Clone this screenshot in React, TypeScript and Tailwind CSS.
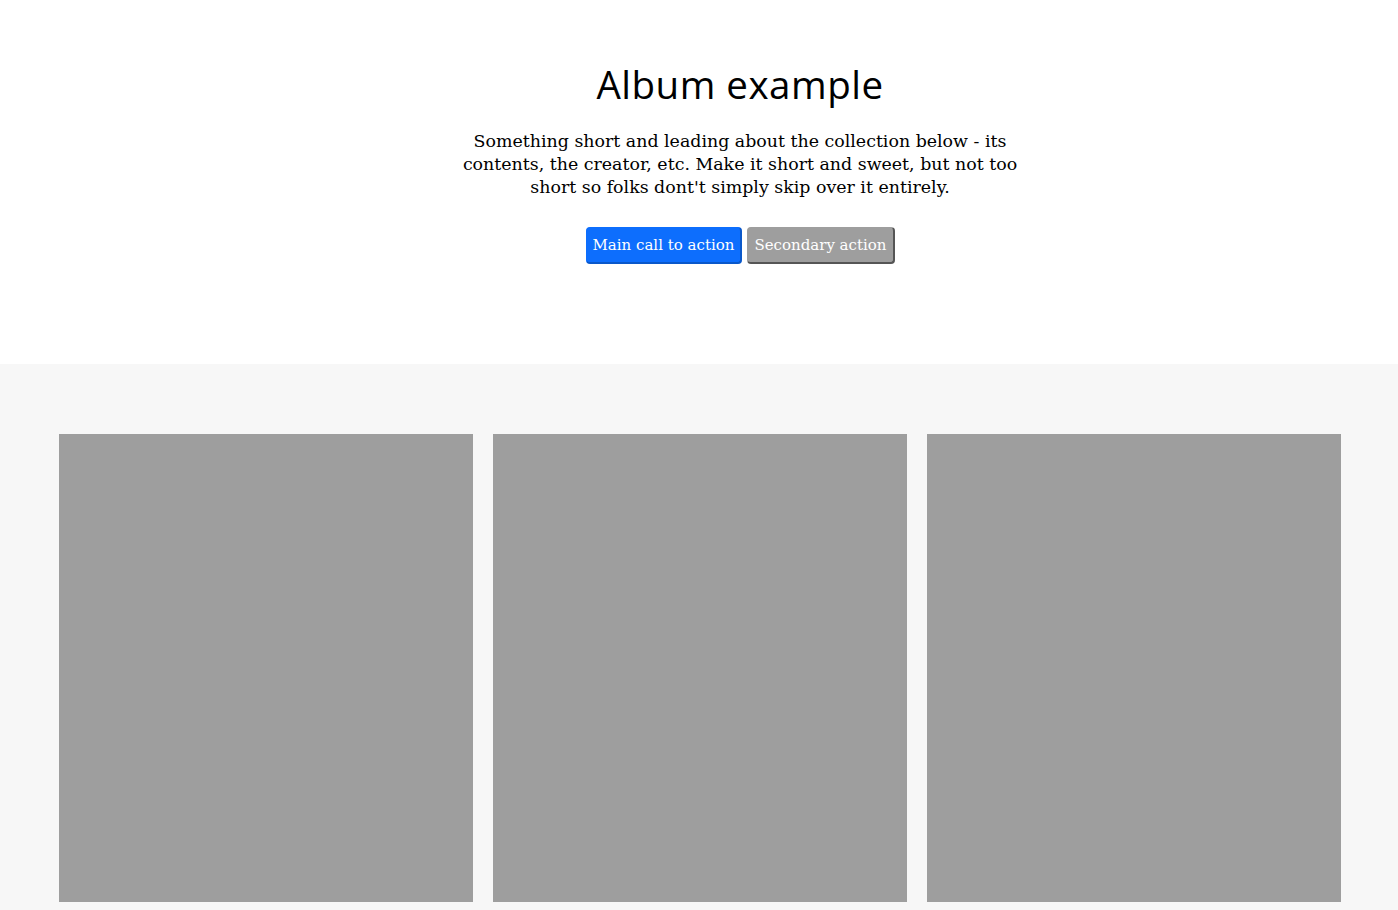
const serif = { fontFamily: '"DejaVu Serif", "Liberation Serif", serif' };

function Hero() {
  return (
    <section className="bg-white pt-[60px] pb-[100px]">
      <div className="flex flex-col items-center pl-[82px] text-center">
        <h1 className="text-[38.5px] leading-[48px] text-black font-normal [font-family:'Open_Sans',sans-serif] tracking-[0.5px]">
          Album example
        </h1>
        <p className="mt-[22px] w-[556px] text-[17.4px] leading-[23px] text-black [font-family:'DejaVu_Serif',serif]">
          Something short and leading about the collection below - its contents, the creator, etc. Make it short and sweet, but not too short so folks dont't simply skip over it entirely.
        </p>
        <div className="mt-[28px] flex gap-[5px]">
          <button
            style={serif}
            className="h-[37px] rounded-[4px] border border-[#0d6efd] border-b-[#0a58ca] border-r-[#0a58ca] border-b-2 border-r-2 bg-[#0d6efd] px-[6px] text-[15px] text-white"
          >
            Main call to action
          </button>
          <button
            style={serif}
            className="h-[37px] rounded-[4px] border border-[#9e9e9e] border-b-[#555] border-r-[#555] border-b-2 border-r-2 bg-[#9e9e9e] px-[6px] text-[15px] text-white"
          >
            Secondary action
          </button>
        </div>
      </div>
    </section>
  );
}

function Album() {
  const cards = [1, 2, 3];
  return (
    <section className="bg-[#f7f7f7] pl-[59px] pr-[57px] pt-[70px] pb-[60px]">
      <div className="grid grid-cols-3 gap-[20px]">
        {cards.map((c) => (
          <div key={c} className="h-[468px] bg-[#9e9e9e]" />
        ))}
      </div>
    </section>
  );
}

export default function App() {
  return (
    <div className="min-h-screen bg-white">
      <Hero />
      <Album />
    </div>
  );
}
